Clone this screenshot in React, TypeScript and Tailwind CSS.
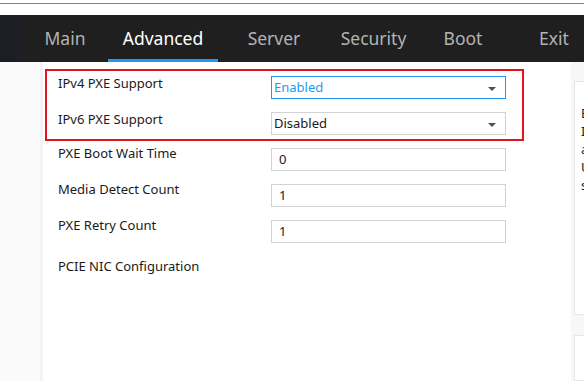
import { ChangeEvent, useState } from "react";

interface Row {
  label: string;
  value: string;
  kind: "select" | "number";
}

const tabs = [
  { name: "Main", w: "w-[70px]", ml: "ml-[11px]" },
  { name: "Advanced", w: "w-[110px]", ml: "ml-[8px]" },
  { name: "Server", w: "w-[84px]", ml: "ml-[14px]" },
  { name: "Security", w: "w-[97px]", ml: "ml-[9px]" },
  { name: "Boot", w: "w-[68px]", ml: "ml-[7px]" },
  { name: "Exit", w: "w-[60px]", ml: "ml-[27px]" },
];

const pxeRows: Row[] = [
  { label: "IPv4 PXE Support", value: "Enabled", kind: "select" },
  { label: "IPv6 PXE Support", value: "Disabled", kind: "select" },
];

const otherRows: Row[] = [
  { label: "PXE Boot Wait Time", value: "0", kind: "number" },
  { label: "Media Detect Count", value: "1", kind: "number" },
  { label: "PXE Retry Count", value: "1", kind: "number" },
];

const helpLines = ["Enable/Disable", "IPv4 PXE boot", "and configure", "UEFI network", "stack support."];

function Arrow() {
  return (
    <svg width="8" height="4" viewBox="0 0 8 4" className="absolute right-[9px] top-[10px]">
      <path d="M0 0H8L4 4Z" fill="#4b505c" />
    </svg>
  );
}

function Field({ row, active, top }: { row: Row; active?: boolean; top: string }) {
  const [value, setValue] = useState(row.value);
  return (
    <div className="flex h-[23px] items-start">
      <span className={`w-[213px] shrink-0 text-[13px] leading-[18px] text-[#1a1a1a] ${top}`}>{row.label}</span>
      <div
        className={`relative flex h-[23px] w-[235px] items-center border bg-white text-[13px] ${
          active ? "border-[#2196f3] text-[#1e9af0]" : "border-[#d2d2d2] text-[#1a1a1a]"
        } ${row.kind === "select" ? "pl-[2px]" : "pl-[7px]"}`}
      >
        {row.kind === "select" ? (
          <>
            <span>{value}</span>
            <Arrow />
          </>
        ) : (
          <input
            className="w-full bg-transparent outline-none"
            value={value}
            onChange={(e: ChangeEvent<HTMLInputElement>) => setValue(e.target.value)}
          />
        )}
      </div>
    </div>
  );
}

export default function App() {
  return (
    <div className="flex h-[381px] w-[584px] flex-col overflow-hidden bg-white font-['Noto_Sans',sans-serif]">
      <div className="mt-[3px] h-px bg-[#4a8fcb]" />
      <div className="h-[11px]" />
      <nav className="flex h-[47px] shrink-0 bg-[#1f1f1f]">
        <div className="w-[22px] bg-[#1c1d25]" />
        {tabs.map((t) => (
          <div
            key={t.name}
            className={`flex shrink-0 items-center justify-center border-b-[3px] pt-[3px] text-[17.5px] ${t.w} ${t.ml} ${
              t.name === "Advanced" ? "border-[#1a9bf0] text-white" : "border-transparent text-[#b3b3b3]"
            }`}
          >
            {t.name}
          </div>
        ))}
      </nav>
      <div className="flex flex-1">
        <aside className="w-[43px] border-r-[3px] border-[#f3f3f3] bg-[#fafafa]" />
        <main className="flex-1 pl-[2px] pt-[7px]">
          <section className="flex w-[479px] flex-col gap-[13px] border-2 border-[#e3131b] pb-[4px] pl-[11px] pt-[5px]">
            {pxeRows.map((r, i) => (
              <Field key={r.label} row={r} active={i === 0} top="-mt-[2px]" />
            ))}
          </section>
          <div className="mt-[7px] flex flex-col gap-[13px] pl-[13px]">
            {otherRows.map((r) => (
              <Field key={r.label} row={r} top="-mt-[4px]" />
            ))}
          </div>
          <div className="mt-[14px] pl-[13px] text-[13px] leading-[18px] text-[#1a1a1a]">PCIE NIC Configuration</div>
        </main>
        <aside className="flex w-[13px] flex-col bg-[#f7f7f7] pl-[3px] pt-[19px]">
          <div className="h-[234px] overflow-hidden border border-r-0 border-[#e6e6e6] bg-white pl-[6px] pt-[22px] text-[13px] leading-[18px] text-[#1a1a1a]">
            {helpLines.map((l) => (
              <div key={l} className="whitespace-nowrap">
                {l}
              </div>
            ))}
          </div>
          <div className="mt-[20px] flex-1 border border-r-0 border-[#e6e6e6] bg-white" />
        </aside>
      </div>
    </div>
  );
}
